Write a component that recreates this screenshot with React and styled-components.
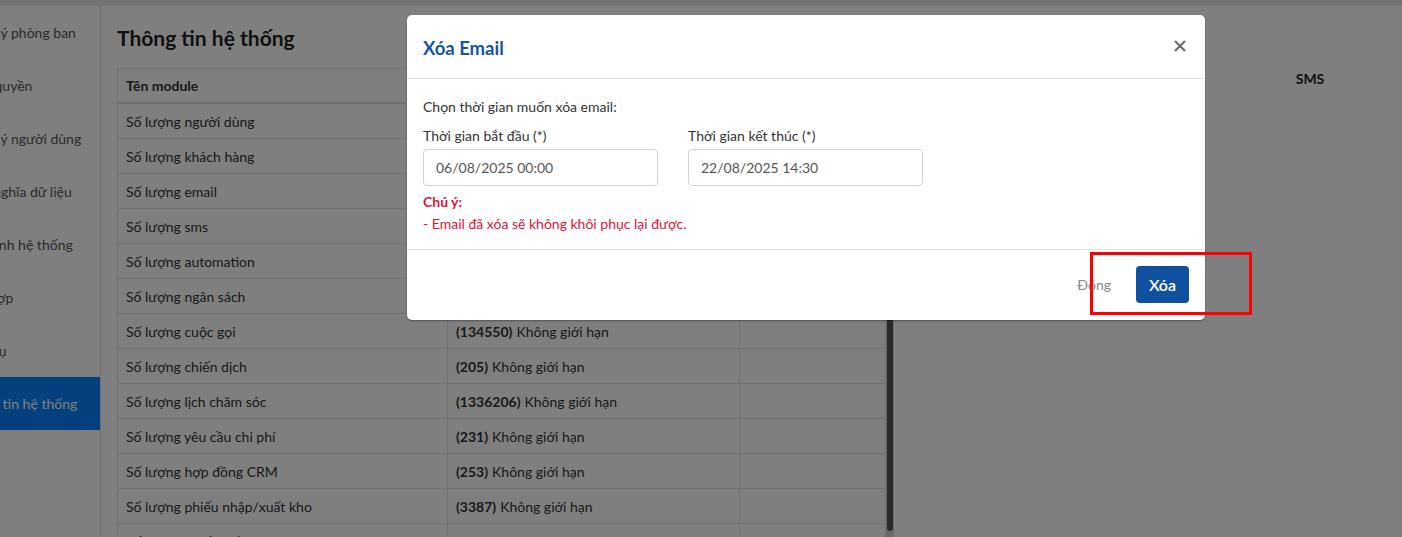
import React from "react";
import styled, { createGlobalStyle } from "styled-components";

const GlobalStyle = createGlobalStyle`
  * { box-sizing: border-box; }
  body {
    margin: 0;
    font-family: Lato, "Noto Sans", sans-serif;
    font-size: 14px;
    color: #333;
  }
`;

const menu = [
    "Quản lý phòng ban",
    "Phân quyền",
    "Quản lý người dùng",
    "Định nghĩa dữ liệu",
    "Cấu hình hệ thống",
    "Tích hợp",
    "Dịch vụ",
    "Thông tin hệ thống",
];

const rows = [
    ["Số lượng người dùng", "125"],
    ["Số lượng khách hàng", "58210"],
    ["Số lượng email", "402317"],
    ["Số lượng sms", "12580"],
    ["Số lượng automation", "64"],
    ["Số lượng ngân sách", "37"],
    ["Số lượng cuộc gọi", "134550"],
    ["Số lượng chiến dịch", "205"],
    ["Số lượng lịch chăm sóc", "1336206"],
    ["Số lượng yêu cầu chi phí", "231"],
    ["Số lượng hợp đồng CRM", "253"],
    ["Số lượng phiếu nhập/xuất kho", "3387"],
    ["Số lượng phiếu kiểm kho", "196"],
];

const Page = styled.div`
    position: relative;
    height: 537px;
    overflow: hidden;
    background: #fff;
    display: flex;
    flex-direction: column;
`;

const TopStrip = styled.div`
    height: 6px;
    background: #e9e9ed;
    flex-shrink: 0;
`;

const Layout = styled.div`
    flex: 1;
    display: flex;
    min-height: 0;
`;

const Sidebar = styled.nav`
    width: 101px;
    flex-shrink: 0;
    border-right: 1px solid #dedede;
    overflow: hidden;
`;

const SideList = styled.div`
    margin-left: -55px;
    width: 155px;
`;

const SideItem = styled.div`
    height: 53px;
    display: flex;
    align-items: center;
    padding-left: 15px;
    white-space: nowrap;
    color: ${p => (p.active ? "#fff" : "#555")};
    background: ${p => (p.active ? "#0a80fc" : "transparent")};
`;

const Main = styled.main`
    flex: 1;
    display: flex;
    padding-left: 16px;
    min-width: 0;
`;

const TableColumn = styled.section`
    width: 777px;
    flex-shrink: 0;
    display: flex;
    flex-direction: column;
`;

const Title = styled.h2`
    margin: 0;
    height: 62px;
    display: flex;
    align-items: center;
    padding-top: 1px;
    font-size: 21px;
    font-weight: 700;
    color: #222;
`;

const TableWrap = styled.div`
    display: flex;
    flex: 1;
    min-height: 0;
`;

const Table = styled.div`
    width: 768px;
    border-left: 1px solid #dee2e6;
    border-top: 1px solid #dee2e6;
`;

const Row = styled.div`
    display: grid;
    grid-template-columns: 330px 292px 146px;
    height: 35px;
    border-bottom: ${p => (p.head ? "2px" : "1px")} solid #dee2e6;
`;

const Cell = styled.div`
    display: flex;
    align-items: center;
    padding: 0 8px;
    border-right: 1px solid #dee2e6;
    white-space: nowrap;
    color: #333;
    font-weight: ${p => (p.head ? 700 : 400)};
    b { font-weight: 700; margin-right: 4px; }
`;

const ScrollTrack = styled.div`
    width: 9px;
    margin-left: 1px;
    background: #d4d4d4;
    display: flex;
    flex-direction: column;
`;

const ScrollThumb = styled.div`
    height: 463px;
    background: #555;
    border-radius: 0 0 4px 4px;
    margin: 0 1px;
`;

const RightPanel = styled.section`
    flex: 1;
    padding-top: 55px;
`;

const RightHead = styled.div`
    display: grid;
    grid-template-columns: 1fr 150px 17px;
    height: 35px;
    align-items: center;
`;

const HeadLabel = styled.span`
    font-weight: 700;
    color: #222;
    text-align: center;
`;

const Overlay = styled.div`
    position: absolute;
    inset: 0;
    background: rgba(0, 0, 0, 0.5);
    display: flex;
    align-items: flex-start;
`;

const Modal = styled.div`
    margin: 15px 0 0 407px;
    width: 798px;
    background: #fff;
    border-radius: 5px;
    box-shadow: 0 1px 2px rgba(0, 0, 0, 0.35);
    display: flex;
    flex-direction: column;
`;

const ModalHeader = styled.header`
    height: 64px;
    display: flex;
    align-items: center;
    justify-content: space-between;
    padding: 2px 16px 0;
    border-bottom: 1px solid #dee2e6;
`;

const ModalTitle = styled.h3`
    margin: 0;
    font-size: 18.5px;
    font-weight: 700;
    color: #1553a5;
`;

const CloseButton = styled.button`
    border: 0;
    background: none;
    padding: 0 3px 3px 0;
    display: flex;
    cursor: pointer;
`;

const ModalBody = styled.div`
    padding: 17px 16px 14px;
    display: flex;
    flex-direction: column;
`;

const Text = styled.p`
    margin: 0;
    line-height: 22px;
    color: ${p => p.color || "#333"};
    font-weight: ${p => (p.bold ? 700 : 400)};
    font-size: 14px;
`;

const Fields = styled.div`
    display: flex;
    gap: 30px;
    margin-top: 7px;
`;

const Field = styled.label`
    display: flex;
    flex-direction: column;
    gap: 2px;
    width: 235px;
`;

const Input = styled.input`
    height: 37px;
    border: 1px solid #ced4da;
    border-radius: 4px;
    padding: 0 12px;
    font-family: inherit;
    font-size: 14px;
    color: #555;
    outline: none;
`;

const Notice = styled.div`
    margin-top: 5px;
`;

const ModalFooter = styled.footer`
    height: 71px;
    border-top: 1px solid #dee2e6;
    display: flex;
    align-items: center;
    justify-content: flex-end;
    gap: 25px;
    padding: 0 16px 2px;
`;

const LinkButton = styled.button`
    border: 0;
    background: none;
    padding: 0;
    font-family: inherit;
    font-size: 14px;
    color: #888;
`;

const PrimaryButton = styled.button`
    width: 53px;
    height: 37px;
    border: 0;
    border-radius: 4px;
    background: #0f51a0;
    color: #fff;
    font-family: inherit;
    font-size: 16px;
    font-weight: 600;
`;

const Highlight = styled.div`
    position: absolute;
    left: 1090px;
    top: 252px;
    width: 162px;
    height: 63px;
    border: 3px solid #ff0000;
`;

const App = () => (
    <>
        <GlobalStyle />
        <Page>
            <TopStrip />
            <Layout>
                <Sidebar>
                    <SideList>
                        {menu.map((m, i) => (
                            <SideItem key={m} active={i === menu.length - 1}>{m}</SideItem>
                        ))}
                    </SideList>
                </Sidebar>
                <Main>
                    <TableColumn>
                        <Title>Thông tin hệ thống</Title>
                        <TableWrap>
                            <Table>
                                <Row head>
                                    <Cell head>Tên module</Cell>
                                    <Cell head>Số lượng</Cell>
                                    <Cell head>Email</Cell>
                                </Row>
                                {rows.map(([name, count]) => (
                                    <Row key={name}>
                                        <Cell>{name}</Cell>
                                        <Cell><b>({count})</b>Không giới hạn</Cell>
                                        <Cell />
                                    </Row>
                                ))}
                            </Table>
                            <ScrollTrack>
                                <ScrollThumb />
                            </ScrollTrack>
                        </TableWrap>
                    </TableColumn>
                    <RightPanel>
                        <RightHead>
                            <HeadLabel>Email</HeadLabel>
                            <HeadLabel>SMS</HeadLabel>
                            <span />
                        </RightHead>
                    </RightPanel>
                </Main>
            </Layout>
            <Overlay>
                <Modal>
                    <ModalHeader>
                        <ModalTitle>Xóa Email</ModalTitle>
                        <CloseButton aria-label="close">
                            <svg width="12" height="12" viewBox="0 0 12 12">
                                <path d="M1 1L11 11M11 1L1 11" stroke="#6c6c6c" strokeWidth="2.2" />
                            </svg>
                        </CloseButton>
                    </ModalHeader>
                    <ModalBody>
                        <Text>Chọn thời gian muốn xóa email:</Text>
                        <Fields>
                            <Field>
                                <Text>Thời gian bắt đầu (*)</Text>
                                <Input defaultValue="06/08/2025 00:00" />
                            </Field>
                            <Field>
                                <Text>Thời gian kết thúc (*)</Text>
                                <Input defaultValue="22/08/2025 14:30" />
                            </Field>
                        </Fields>
                        <Notice>
                            <Text bold color="#dc143c">Chú ý:</Text>
                            <Text color="#dc143c">- Email đã xóa sẽ không khôi phục lại được.</Text>
                        </Notice>
                    </ModalBody>
                    <ModalFooter>
                        <LinkButton>Đóng</LinkButton>
                        <PrimaryButton>Xóa</PrimaryButton>
                    </ModalFooter>
                </Modal>
            </Overlay>
            <Highlight />
        </Page>
    </>
);

export default App;
